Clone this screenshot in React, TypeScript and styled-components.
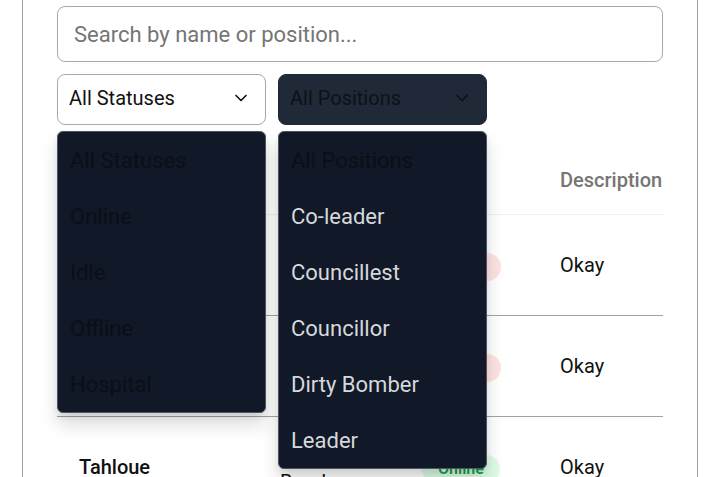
import React, { useState } from "react"
import styled, { createGlobalStyle } from "styled-components"
import { ChevronDown } from "lucide-react"

const GlobalStyle = createGlobalStyle`
  body {
    margin: 0;
    background: #ffffff;
    font-family: Roboto, "Liberation Sans", sans-serif;
    overflow: hidden;
  }
`

const Page = styled.div`
  padding-top: 6px;
`

const Card = styled.div`
  width: 676px;
  margin-left: 22px;
  margin-top: -30px;
  padding: 30px 34px 40px;
  box-sizing: border-box;
  background: #fff;
  border: 1px solid #a3a3a3;
  border-top: none;
`

const SearchInput = styled.input`
  display: block;
  width: 100%;
  height: 56px;
  box-sizing: border-box;
  padding: 0 16px;
  border: 1px solid #a8a8a8;
  border-radius: 8px;
  font-family: inherit;
  font-size: 22px;
  color: #111;
  outline: none;
  &::placeholder {
    color: #757575;
  }
`

const FilterRow = styled.div`
  display: flex;
  gap: 12px;
  margin-top: 12px;
`

const SelectWrap = styled.div`
  position: relative;
  width: 209px;
`

const SelectButton = styled.div<{ $dark?: boolean }>`
  height: 51px;
  box-sizing: border-box;
  display: flex;
  align-items: center;
  justify-content: space-between;
  padding: 0 14px 3px 11px;
  border-radius: 8px;
  border: 1px solid ${p => (p.$dark ? "#1f2937" : "#a8a8a8")};
  background: ${p => (p.$dark ? "#1f2937" : "#fff")};
  color: ${p => (p.$dark ? "#0d1118" : "#111")};
  font-size: 20px;
`

const Menu = styled.ul`
  position: absolute;
  top: 57px;
  left: 0;
  width: 100%;
  margin: 0;
  padding: 0;
  list-style: none;
  background: #111827;
  border: 1px solid #4b5563;
  border-radius: 6px;
  box-sizing: border-box;
  box-shadow: 0 12px 18px rgba(0, 0, 0, 0.14), 0 4px 6px rgba(0, 0, 0, 0.07);
  z-index: 10;
`

const MenuItem = styled.li<{ $muted?: boolean }>`
  height: 56px;
  display: flex;
  align-items: center;
  padding: 0 12px;
  font-size: 22px;
  color: ${p => (p.$muted ? "#0b0f17" : "#d6d8dc")};
`

const Table = styled.table`
  width: 100%;
  margin-top: 20px;
  border-collapse: collapse;
  table-layout: fixed;
`

const HeadCell = styled.th`
  height: 69px;
  padding: 0 22px;
  text-align: left;
  font-size: 20px;
  font-weight: 500;
  color: #757575;
  border-bottom: 1px solid #f0f0f0;
`

const Row = styled.tr`
  height: 101px;
  border-bottom: 1px solid #a3a3a3;
`

const Cell = styled.td<{ $strong?: boolean }>`
  padding: 0 22px;
  font-size: 20px;
  line-height: 30px;
  color: #111;
  font-weight: ${p => (p.$strong ? 500 : 400)};
  vertical-align: middle;
`

const Badge = styled.span<{ $tone: "green" | "red" }>`
  display: inline-block;
  padding: 1px 16px;
  border-radius: 999px;
  font-size: 16px;
  font-weight: 600;
  line-height: 26px;
  background: ${p => (p.$tone === "green" ? "#dcfce7" : "#fee2e2")};
  color: ${p => (p.$tone === "green" ? "#16a34a" : "#dc2626")};
`

type Member = {
  name: string
  position: string
  status: string
  description: string
}

const statuses = ["All Statuses", "Online", "Idle", "Offline", "Hospital"]
const positions = ["All Positions", "Co-leader", "Councillest", "Councillor", "Dirty Bomber", "Leader"]
const columnWidths = [201, 142, 138, 125]

const members: Member[] = [
  { name: "Kravenhart", position: "Councillor", status: "Offline", description: "Okay" },
  { name: "Mizuki", position: "Co-leader", status: "Offline", description: "Okay" },
  { name: "Tahloue", position: "Dirty Bomber", status: "Online", description: "Okay" },
]

export default function App() {
  let [search, setSearch] = useState<string>("")

  return (
    <Page>
      <GlobalStyle />
      <Card>
        <SearchInput
          placeholder="Search by name or position..."
          value={search}
          onChange={e => setSearch(e.target.value)}
        />
        <FilterRow>
          <SelectWrap>
            <SelectButton>
              All Statuses
              <ChevronDown size={20} strokeWidth={2} />
            </SelectButton>
            <Menu>
              {statuses.map(s => (
                <MenuItem key={s} $muted>{s}</MenuItem>
              ))}
            </Menu>
          </SelectWrap>
          <SelectWrap>
            <SelectButton $dark>
              All Positions
              <ChevronDown size={20} strokeWidth={2} />
            </SelectButton>
            <Menu>
              {positions.map((p, i) => (
                <MenuItem key={p} $muted={i === 0}>{p}</MenuItem>
              ))}
            </Menu>
          </SelectWrap>
        </FilterRow>
        <Table>
          <colgroup>
            {columnWidths.map((w, i) => (
              <col key={i} style={{ width: w }} />
            ))}
          </colgroup>
          <thead>
            <tr>
              <HeadCell>Name</HeadCell>
              <HeadCell>Position</HeadCell>
              <HeadCell>Status</HeadCell>
              <HeadCell>Description</HeadCell>
            </tr>
          </thead>
          <tbody>
            {members.map(m => (
              <Row key={m.name}>
                <Cell $strong>{m.name}</Cell>
                <Cell>{m.position}</Cell>
                <Cell>
                  <Badge $tone={m.status === "Online" ? "green" : "red"}>{m.status}</Badge>
                </Cell>
                <Cell>{m.description}</Cell>
              </Row>
            ))}
          </tbody>
        </Table>
      </Card>
    </Page>
  )
}
